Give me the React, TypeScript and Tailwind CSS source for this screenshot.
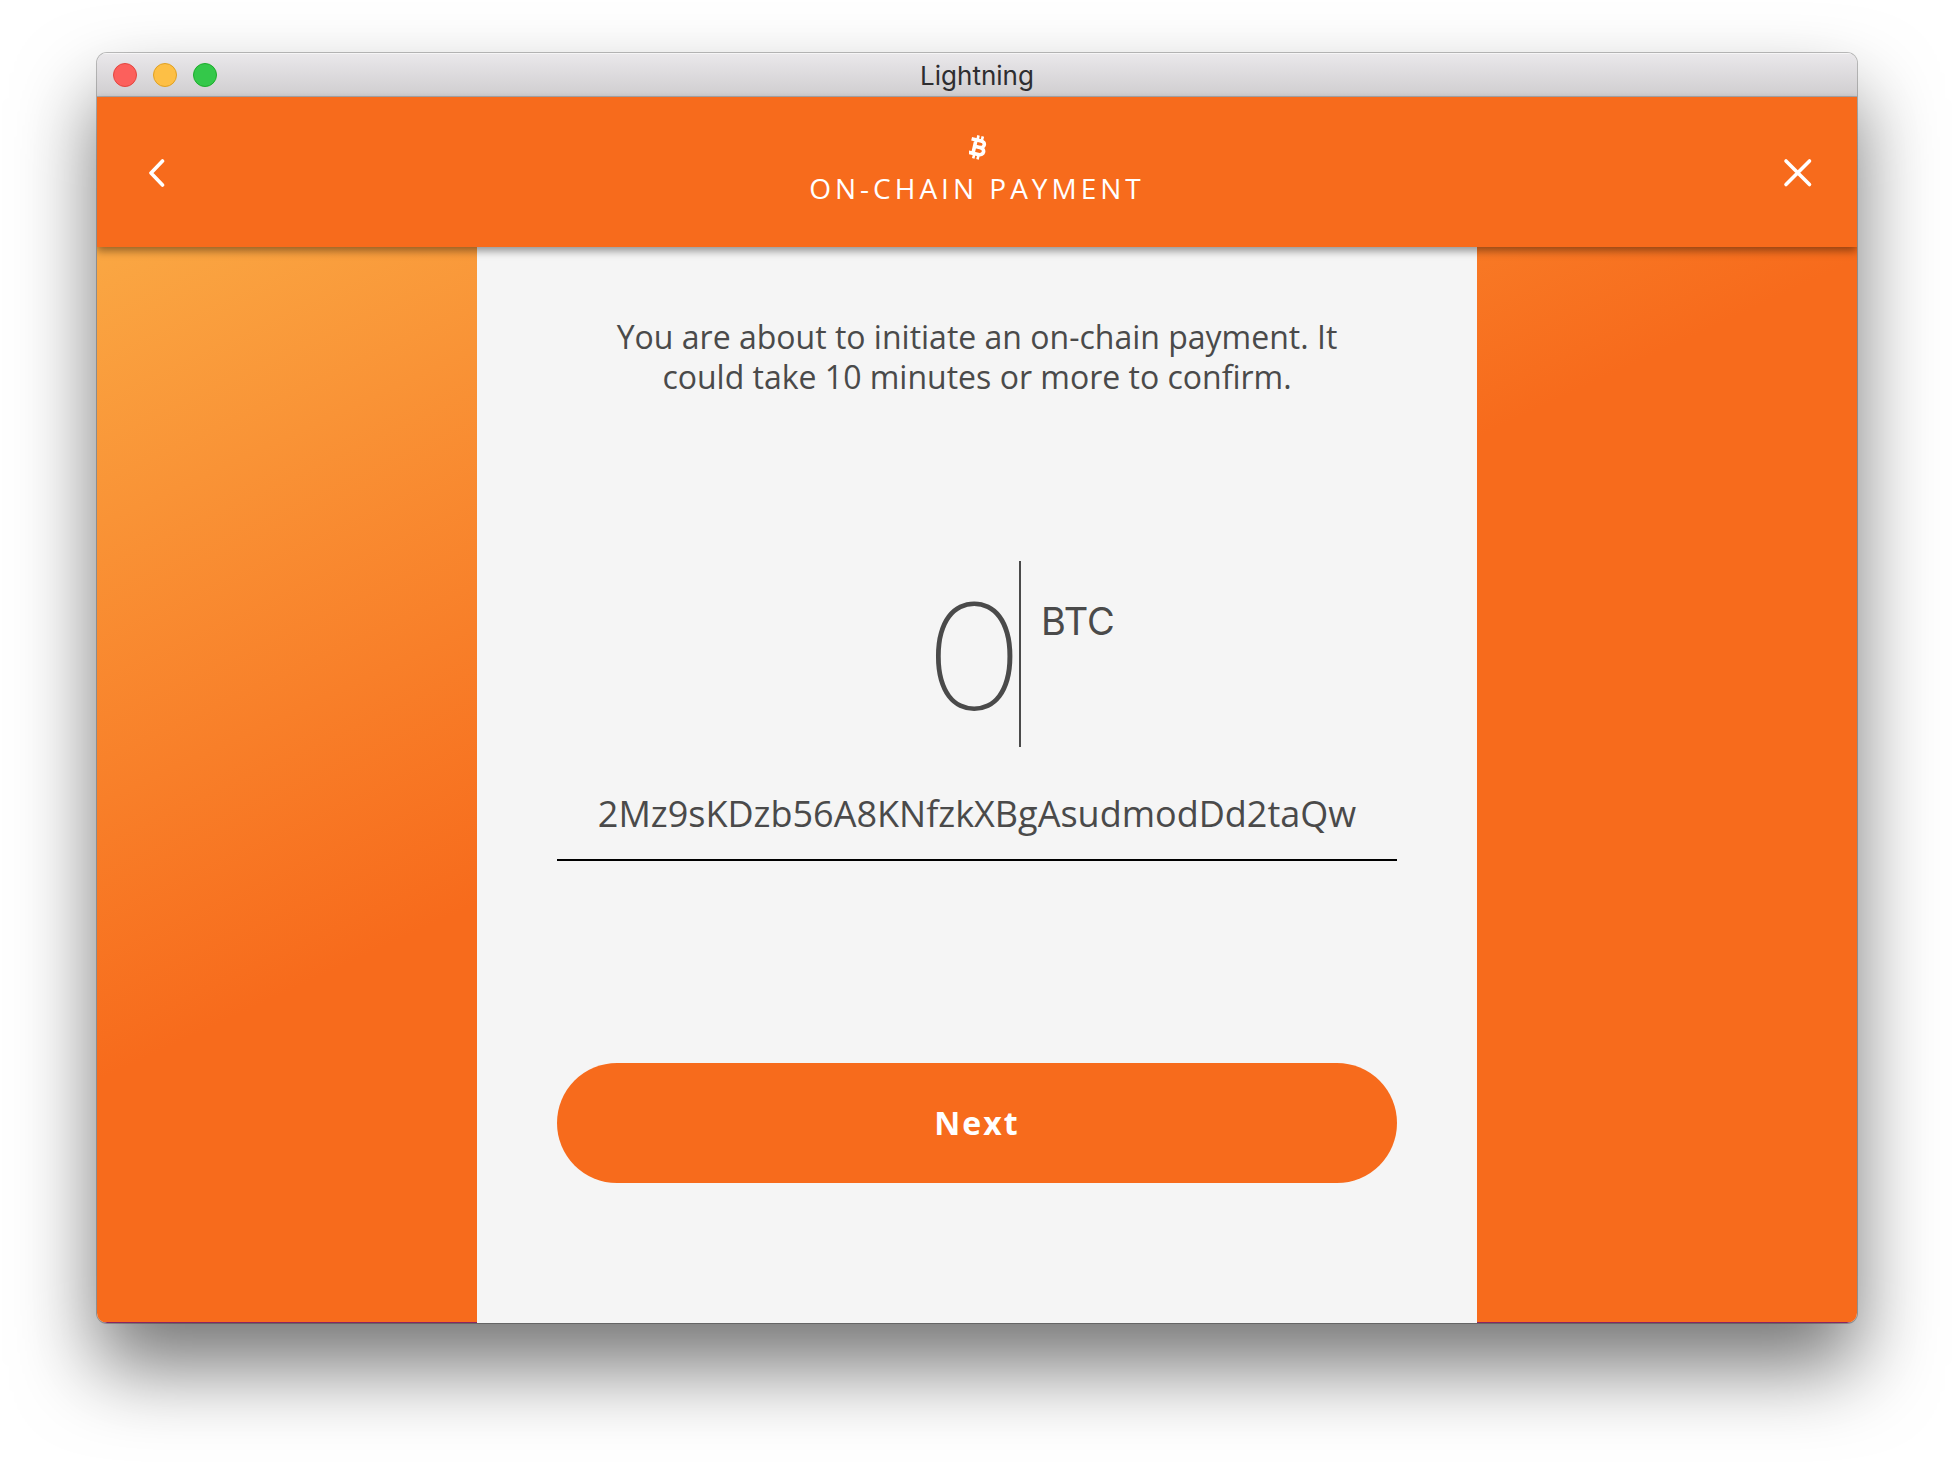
import { useState } from 'react';

const TITLE_BUTTONS = [
  { label: 'Close window', color: 'bg-[#fc605c] border-[#e2463f]' },
  { label: 'Minimize window', color: 'bg-[#fdbf45] border-[#dfa023]' },
  { label: 'Zoom window', color: 'bg-[#34c84a] border-[#1dac2b]' },
];

function TitleBar() {
  return (
    <div className="grid h-11 grid-cols-[1fr_auto_1fr] items-center border-b border-[#aaa8aa] bg-linear-to-b from-[#eae8eb] to-[#d0ced0] px-4 shadow-[inset_0_1px_0_#f6f5f6]">
      <div className="flex gap-4">
        {TITLE_BUTTONS.map(({ label, color }) => (
          <button key={label} aria-label={label} className={`size-6 rounded-full border ${color}`} />
        ))}
      </div>
      <h1 className="pt-0.5 font-['Inter'] text-[26px] leading-8 text-[#2e2d30]">Lightning</h1>
    </div>
  );
}

function BitcoinIcon() {
  return (
    <svg viewBox="0 0 20 25" className="ml-1 h-[25px] w-5" fill="none" stroke="currentColor" aria-hidden="true">
      <g transform="translate(-0.8 0) rotate(13 10 12.5)">
        <path d="M1.6 5.4H11.4C16.6 5.4 16.6 12 11.6 12C17.8 12 17.6 19.4 11.6 19.4H1.6M6.2 5.4V19.4M6.2 12.1H11.6" strokeWidth="3.6" />
        <path d="M7.6 0.6V5M12 0.6V5M7.6 19.5V24.2M12 19.5V24.2" strokeWidth="2.6" />
      </g>
    </svg>
  );
}

function Header() {
  return (
    <header className="relative z-10 flex h-[150px] items-center justify-between bg-[#f76b1c] pr-11 pl-12 text-white shadow-[0_4px_8px_rgba(0,0,0,0.4)]">
      <button aria-label="Back" className="flex h-8 w-7 items-center justify-start">
        <svg viewBox="0 0 20 32" className="h-8 w-5" fill="none" stroke="currentColor" strokeWidth="3.6" strokeLinecap="round" strokeLinejoin="round">
          <path d="M17.5 5L6 17L17.5 29" />
        </svg>
      </button>
      <div className="flex flex-col items-center gap-3 pb-1.5">
        <BitcoinIcon />
        <h2 className="text-[28px] leading-8 tracking-[4px]">ON-CHAIN PAYMENT</h2>
      </div>
      <button aria-label="Close" className="flex size-8 items-center justify-end">
        <svg viewBox="0 0 32 32" className="size-8" fill="none" stroke="currentColor" strokeWidth="3.6" strokeLinecap="round">
          <path d="M5 5L28.5 28.5M28.5 5L5 28.5" />
        </svg>
      </button>
    </header>
  );
}

function PaymentForm() {
  const [amount, setAmount] = useState('0');
  const [address, setAddress] = useState('2Mz9sKDzb56A8KNfzkXBgAsudmodDd2taQw');

  return (
    <form
      className="relative -mb-px flex w-full max-w-[1000px] flex-col bg-[#f5f5f5] px-20 pt-[70px] pb-[140px] text-[#4a4a4a]"
      onSubmit={(e) => e.preventDefault()}
    >
      <p className="px-10 text-center text-[32px] leading-10">
        You are about to initiate an on-chain payment. It could take 10 minutes or more to confirm.
      </p>

      <div className="mt-[164px] flex items-start justify-center font-['Inter']">
        <div className="flex border-r-2 border-[#4a4a4a] pl-[92px]">
          <input
            aria-label="Amount"
            value={amount}
            onChange={(e) => setAmount(e.target.value)}
            className="field-sizing-content h-[186px] bg-transparent pr-0.5 pb-1 text-right font-['Lato'] text-[148px] leading-[182px] font-extralight outline-none [-webkit-text-stroke:3px_#4a4a4a]"
          />
        </div>
        <span className="mt-10 ml-5 text-[38px] leading-10">BTC</span>
      </div>

      <input
        aria-label="Payment address"
        value={address}
        onChange={(e) => setAddress(e.target.value)}
        className="mt-8 h-[82px] w-full border-b-2 border-black bg-transparent pb-3 text-center text-4xl outline-none"
      />

      <button
        type="submit"
        className="mt-auto h-[120px] w-full rounded-full bg-[#f76b1c] text-[32px] font-bold tracking-[2px] text-white"
      >
        Next
      </button>
    </form>
  );
}

export default function App() {
  return (
    <div className="flex min-h-screen flex-col bg-white pt-[53px] pr-24 pb-[148px] pl-[97px] font-['Open_Sans',sans-serif]">
      <div className="flex grow flex-col rounded-[10px] shadow-[0_0_0_1px_rgba(0,0,0,0.25),0_44px_80px_rgba(0,0,0,0.54)]">
        <div className="flex grow flex-col overflow-hidden rounded-[10px]">
          <TitleBar />
          <Header />
          <main className="flex grow justify-center border-b border-[#8b2560] bg-[linear-gradient(155deg,#faa743_0%,#f76b1c_44%)]">
            <PaymentForm />
          </main>
        </div>
      </div>
    </div>
  );
}
